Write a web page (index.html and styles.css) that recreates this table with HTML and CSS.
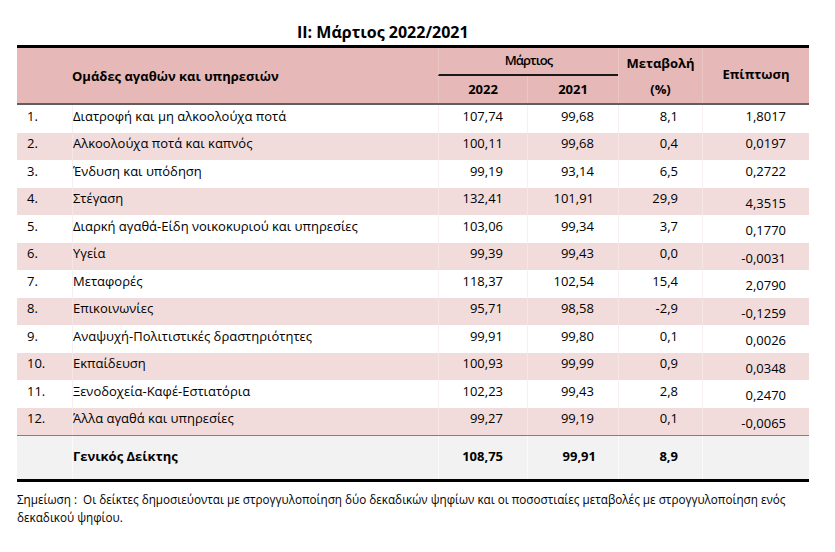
FILE: index.html
```html
<!DOCTYPE html>
<html lang="el">
<head>
<meta charset="utf-8">
<title>Μάρτιος 2022/2021</title>
<link rel="stylesheet" href="styles.css">
</head>
<body>
<div class="page">
  <h1 class="title">II: Μάρτιος 2022/2021</h1>
  <div class="cpi">
    <div class="head">
      <div class="hl">Ομάδες αγαθών και υπηρεσιών</div>
      <div class="month">Μάρτιος</div>
      <div class="hc y22">2022</div>
      <div class="hc y21">2021</div>
      <div class="hc chg1">Μεταβολή</div>
      <div class="hc chg2">(%)</div>
      <div class="hc imp">Επίπτωση</div>
    </div>
    <div class="row"><span class="num">1.</span><span class="label">Διατροφή και μη αλκοολούχα ποτά</span><span class="v">107,74</span><span class="v">99,68</span><span class="v">8,1</span><span class="v i">1,8017</span></div>
    <div class="row alt"><span class="num">2.</span><span class="label">Αλκοολούχα ποτά και καπνός</span><span class="v">100,11</span><span class="v">99,68</span><span class="v">0,4</span><span class="v i">0,0197</span></div>
    <div class="row"><span class="num">3.</span><span class="label">Ένδυση και υπόδηση</span><span class="v">99,19</span><span class="v">93,14</span><span class="v">6,5</span><span class="v i">0,2722</span></div>
    <div class="row alt"><span class="num">4.</span><span class="label">Στέγαση</span><span class="v">132,41</span><span class="v">101,91</span><span class="v">29,9</span><span class="v i low">4,3515</span></div>
    <div class="row"><span class="num">5.</span><span class="label">Διαρκή αγαθά-Είδη νοικοκυριού και υπηρεσίες</span><span class="v">103,06</span><span class="v">99,34</span><span class="v">3,7</span><span class="v i low">0,1770</span></div>
    <div class="row alt"><span class="num">6.</span><span class="label">Υγεία</span><span class="v">99,39</span><span class="v">99,43</span><span class="v">0,0</span><span class="v i low">-0,0031</span></div>
    <div class="row"><span class="num">7.</span><span class="label">Μεταφορές</span><span class="v">118,37</span><span class="v">102,54</span><span class="v">15,4</span><span class="v i low">2,0790</span></div>
    <div class="row alt"><span class="num">8.</span><span class="label">Επικοινωνίες</span><span class="v">95,71</span><span class="v">98,58</span><span class="v">-2,9</span><span class="v i low">-0,1259</span></div>
    <div class="row"><span class="num">9.</span><span class="label">Αναψυχή-Πολιτιστικές δραστηριότητες</span><span class="v">99,91</span><span class="v">99,80</span><span class="v">0,1</span><span class="v i low">0,0026</span></div>
    <div class="row alt"><span class="num">10.</span><span class="label">Εκπαίδευση</span><span class="v">100,93</span><span class="v">99,99</span><span class="v">0,9</span><span class="v i low">0,0348</span></div>
    <div class="row"><span class="num">11.</span><span class="label">Ξενοδοχεία-Καφέ-Εστιατόρια</span><span class="v">102,23</span><span class="v">99,43</span><span class="v">2,8</span><span class="v i low">0,2470</span></div>
    <div class="row alt"><span class="num">12.</span><span class="label">Άλλα αγαθά και υπηρεσίες</span><span class="v">99,27</span><span class="v">99,19</span><span class="v">0,1</span><span class="v i low">-0,0065</span></div>
    <div class="row total"><span class="num"></span><span class="label">Γενικός Δείκτης</span><span class="v">108,75</span><span class="v t21">99,91</span><span class="v">8,9</span><span class="v i"></span></div>
  </div>
  <p class="note">Σημείωση :&nbsp; Οι δείκτες δημοσιεύονται με στρογγυλοποίηση δύο δεκαδικών ψηφίων και οι ποσοστιαίες μεταβολές με στρογγυλοποίηση ενός δεκαδικού ψηφίου.</p>
</div>
</body>
</html>
```

FILE: styles.css
```css
html, body {
  margin: 0;
  padding: 0;
  background: #ffffff;
}
body {
  font-family: "Open Sans", "Noto Sans", sans-serif;
  color: #000000;
}
.page {
  width: 792px;
  padding-left: 17px;
}
.title {
  margin: 0;
  height: 45px;
  box-sizing: border-box;
  padding: 22px 0 0 280px;
  font-size: 16px;
  line-height: 20px;
  font-weight: 700;
}
.cpi {
  width: 792px;
  font-size: 13px;
  border-top: 3px solid #000000;
  border-bottom: 3px solid #000000;
}
.head, .row {
  display: grid;
  grid-template-columns: 55px 366px 89px 91px 84px 107px;
}
.head {
  grid-template-rows: 27.5px 27.5px;
  background: #e6b8b7;
  font-weight: 700;
  line-height: 18px;
  border-bottom: 2px solid #5f5f5f;
}
.head > div {
  display: flex;
  align-items: center;
  justify-content: center;
  border-left: 1px solid #ecc6c5;
}
.head .hl {
  grid-column: 1 / 3;
  grid-row: 1 / 3;
  justify-content: flex-start;
  padding-left: 55px;
  border-left: none;
}
.head .month {
  grid-column: 3 / 5;
  grid-row: 1;
  font-weight: 600;
  letter-spacing: -0.9px;
  border-bottom: 2px solid #1a1a1a;
  padding-bottom: 1px;
}
.head .y22 { grid-column: 3; grid-row: 2; }
.head .y21 { grid-column: 4; grid-row: 2; }
.head .chg1 { grid-column: 5; grid-row: 1; padding-top: 3px; }
.head .chg2 { grid-column: 5; grid-row: 2; }
.head .imp { grid-column: 6; grid-row: 1 / 3; padding-bottom: 4px; }

.row {
  height: 27.5px;
  line-height: 18px;
}
.row > span {
  display: flex;
  align-items: center;
  padding-bottom: 6px;
  border-left: 1px solid #f8f0f0;
  white-space: nowrap;
}
.row > span:first-child { border-left: none; }
.row .num { padding-left: 10px; }
.row .v { justify-content: flex-end; padding-right: 24px; }
.row .i { padding-right: 23px; }
.row .low { padding-bottom: 0; padding-top: 3px; }
.row.alt { background: #f2dcdb; }
.row.alt > span { border-left-color: #f6e6e6; }
.row.alt > span:first-child { border-left: none; }
.row.total {
  height: 43px;
  background: #f2f2f2;
  font-weight: 700;
  border-top: 1px solid #808080;
}
.row.total > span { border-left-color: #fafafa; padding-bottom: 4px; }
.row.total > span:first-child { border-left: none; }
.row.total .t21 { padding-right: 22px; }
.note {
  margin: 8px 0 0 0;
  font-size: 11.7px;
  line-height: 18px;
  width: 790px;
}
```
